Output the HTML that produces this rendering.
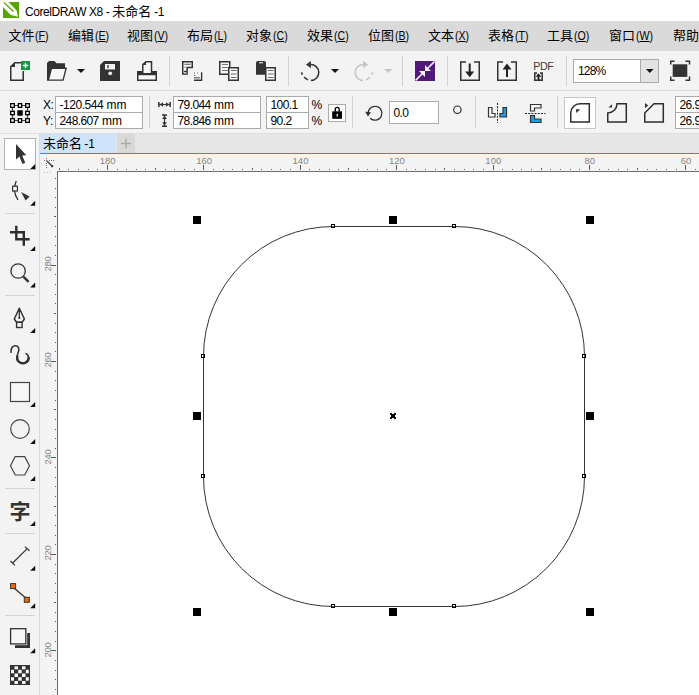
<!DOCTYPE html>
<html><head><meta charset="utf-8"><title>CorelDRAW X8</title>
<style>
html,body{margin:0;padding:0;}
body{width:699px;height:695px;overflow:hidden;position:relative;background:#fff;font-family:"Liberation Sans","Noto Sans CJK SC",sans-serif;font-size:12px;color:#000;}
.abs{position:absolute;}
#title{left:0;top:0;width:699px;height:21px;background:#fff;}
#title .t{left:25px;top:1.5px;font-size:13px;line-height:19px;white-space:nowrap;}
#title .t .l{letter-spacing:-0.42px;font-size:12px;}
#menu{left:0;top:21px;width:699px;height:30px;background:#dadada;}
#menu span.m{position:absolute;top:5px;font-size:13px;line-height:19px;white-space:nowrap;}
#menu span.m i{font-style:normal;font-size:12px;display:inline-block;transform:scaleX(0.88);transform-origin:left center;margin-left:0.8px;}
#menu span.m u{text-decoration:underline;text-underline-offset:1px;}
#tb1{left:0;top:51px;width:699px;height:39px;background:#f3f3f3;}
#tb2{left:0;top:90px;width:699px;height:43px;background:#f3f3f3;border-top:1px solid #dcdcdc;box-sizing:border-box;}
#tabs{left:40px;top:133px;width:659px;height:19px;background:#e7e7e7;border-top:1px solid #dedede;border-bottom:1px solid #1c97ea;}
#tab1{left:0;top:0px;width:76px;height:19px;background:#cfe3fa;font-size:13px;line-height:18px;white-space:nowrap;}
#tab1 span{position:absolute;left:3px;top:0.7px;}
#tab2{left:77px;top:0px;width:18px;height:19px;background:#d9d9d9;}
#toolbox{left:0;top:133px;width:39px;height:562px;background:#f3f3f3;border-right:1px solid #dadada;border-top:1px solid #e2e2e2;box-sizing:content-box;}
#rulerh{left:40px;top:154px;width:659px;height:17px;background:#f4f4f4;}
#rulerv{left:40px;top:171px;width:17px;height:524px;background:#f4f4f4;}
#canvas{left:57px;top:171px;width:642px;height:524px;background:#fff;border-left:1px solid #6e6e6e;border-top:1px solid #6e6e6e;box-sizing:border-box;}
.inp{position:absolute;background:#fff;border:1px solid #ababab;box-sizing:border-box;font-size:12px;line-height:17px;padding-left:3.5px;white-space:nowrap;overflow:hidden;}
.inp b{font-weight:normal;letter-spacing:-0.6px;}
.lbl{position:absolute;font-size:12px;line-height:17px;white-space:nowrap;letter-spacing:-0.4px;}
.rt{position:absolute;font-size:9.5px;line-height:10px;color:#858585;white-space:nowrap;text-align:center;width:30px;}
.rv{position:absolute;font-size:9.5px;line-height:10px;color:#858585;letter-spacing:-0.3px;white-space:nowrap;text-align:center;width:30px;height:10px;transform:rotate(-90deg);transform-origin:center center;}
#zi{left:0;top:0;width:699px;height:695px;pointer-events:none;}
.tl{position:absolute;font-weight:bold;font-size:21px;line-height:21px;color:#333;}
</style></head><body>
<div id="title" class="abs"><div class="abs t"><span class="l">CorelDRAW X8 - </span>未命名<span class="l" style="letter-spacing:-0.5px"> -1</span></div></div>
<div id="menu" class="abs"><span class="m" style="left:8.5px">文件<i>(<u>F</u>)</i></span><span class="m" style="left:68px">编辑<i>(<u>E</u>)</i></span><span class="m" style="left:127px">视图<i>(<u>V</u>)</i></span><span class="m" style="left:187px">布局<i>(<u>L</u>)</i></span><span class="m" style="left:246px">对象<i>(<u>C</u>)</i></span><span class="m" style="left:307px">效果<i>(<u>C</u>)</i></span><span class="m" style="left:368px">位图<i>(<u>B</u>)</i></span><span class="m" style="left:428px">文本<i>(<u>X</u>)</i></span><span class="m" style="left:488px">表格<i>(<u>T</u>)</i></span><span class="m" style="left:547px">工具<i>(<u>O</u>)</i></span><span class="m" style="left:609px">窗口<i>(<u>W</u>)</i></span><span class="m" style="left:673px">帮助<i>(<u>H</u>)</i></span></div>
<div id="tb1" class="abs"></div>
<div id="tb2" class="abs"></div>
<div class="lbl" style="left:43px;top:97px">X:</div><div class="lbl" style="left:43px;top:113px">Y:</div><div class="inp" style="left:55px;top:96px;width:88px;height:17px"><b style="letter-spacing:-0.45px">-120.544</b> mm</div><div class="inp" style="left:55px;top:112px;width:88px;height:17px"><b>248.607</b> mm</div><div class="inp" style="left:173px;top:96px;width:88px;height:17px"><b>79.044</b> mm</div><div class="inp" style="left:173px;top:112px;width:88px;height:17px"><b>78.846</b> mm</div><div class="inp" style="left:266px;top:96px;width:43px;height:17px"><b>100.1</b></div><div class="inp" style="left:266px;top:112px;width:43px;height:17px"><b>90.2</b></div><div class="lbl" style="left:311.6px;top:97px">%</div><div class="lbl" style="left:311.6px;top:113px">%</div><div class="inp" style="left:328px;top:104px;width:18px;height:18px;padding:0"></div><div class="inp" style="left:389px;top:101px;width:50px;height:23px;line-height:23px"><b>0.0</b></div><div class="inp" style="left:564px;top:97px;width:32px;height:32px;padding:0;border-color:#c6c6c6"></div><div class="inp" style="left:675px;top:96px;width:40px;height:17px"><b>26.9</b></div><div class="inp" style="left:675px;top:112px;width:40px;height:17px"><b>26.9</b></div><div class="inp" style="left:573px;top:59px;width:86px;height:24px;line-height:22px;padding-left:4px"><b style="letter-spacing:-0.85px">128%</b></div><div class="abs" style="left:640px;top:60px;width:17px;height:22px;background:#e3e3e3;border-left:1px solid #ababab"></div><div class="abs" id="pdf" style="left:533.3px;top:59.8px;font-size:10.7px;line-height:12px;color:#3c3c3c;letter-spacing:-0.45px">PDF</div><div id="tabs" class="abs"><div id="tab1" class="abs"><span>未命名<span style="position:static;font-size:12px;margin-left:-1px"> -1</span></span></div><div id="tab2" class="abs"></div></div>
<div id="toolbox" class="abs"></div>
<div id="rulerh" class="abs"></div>
<div id="rulerv" class="abs"></div>
<div id="canvas" class="abs"></div>
<div class="tl" style="left:9.5px;top:500.8px">字</div>
<div class="rt" style="left:92.7px;top:155.5px">180</div><div class="rt" style="left:189.1px;top:155.5px">160</div><div class="rt" style="left:285.5px;top:155.5px">140</div><div class="rt" style="left:381.9px;top:155.5px">120</div><div class="rt" style="left:478.3px;top:155.5px">100</div><div class="rt" style="left:574.7px;top:155.5px">80</div><div class="rt" style="left:671.1px;top:155.5px">60</div><div class="rv" style="left:32.5px;top:259.0px">280</div><div class="rv" style="left:32.5px;top:355.4px">260</div><div class="rv" style="left:32.5px;top:451.8px">240</div><div class="rv" style="left:32.5px;top:548.2px">220</div><div class="rv" style="left:32.5px;top:644.6px">200</div><svg id="zi" class="abs" width="699" height="695" viewBox="0 0 699 695">
<path d="M59.5,168V170M68.5,169V170M78.5,169V170M88.5,169V170M97.5,169V170M107.5,165V170M117.5,169V170M126.5,169V170M136.5,169V170M145.5,169V170M155.5,168V170M165.5,169V170M174.5,169V170M184.5,169V170M194.5,169V170M203.5,165V170M213.5,169V170M223.5,169V170M232.5,169V170M242.5,169V170M252.5,168V170M261.5,169V170M271.5,169V170M280.5,169V170M290.5,169V170M300.5,165V170M309.5,169V170M319.5,169V170M329.5,169V170M338.5,169V170M348.5,168V170M358.5,169V170M367.5,169V170M377.5,169V170M386.5,169V170M396.5,165V170M406.5,169V170M415.5,169V170M425.5,169V170M435.5,169V170M444.5,168V170M454.5,169V170M464.5,169V170M473.5,169V170M483.5,169V170M493.5,165V170M502.5,169V170M512.5,169V170M521.5,169V170M531.5,169V170M541.5,168V170M550.5,169V170M560.5,169V170M570.5,169V170M579.5,169V170M589.5,165V170M599.5,169V170M608.5,169V170M618.5,169V170M627.5,169V170M637.5,168V170M647.5,169V170M656.5,169V170M666.5,169V170M676.5,169V170M685.5,165V170M695.5,169V170" stroke="#5a5a5a" stroke-width="1" fill="none" shape-rendering="crispEdges"/>
<path d="M55,178.5H56M55,188.5H56M55,197.5H56M55,207.5H56M54,216.5H56M55,226.5H56M55,236.5H56M55,245.5H56M55,255.5H56M51,265.5H56M55,274.5H56M55,284.5H56M55,294.5H56M55,303.5H56M54,313.5H56M55,323.5H56M55,332.5H56M55,342.5H56M55,351.5H56M51,361.5H56M55,371.5H56M55,380.5H56M55,390.5H56M55,400.5H56M54,409.5H56M55,419.5H56M55,429.5H56M55,438.5H56M55,448.5H56M51,457.5H56M55,467.5H56M55,477.5H56M55,486.5H56M55,496.5H56M54,506.5H56M55,515.5H56M55,525.5H56M55,535.5H56M55,544.5H56M51,554.5H56M55,564.5H56M55,573.5H56M55,583.5H56M55,592.5H56M54,602.5H56M55,612.5H56M55,621.5H56M55,631.5H56M55,641.5H56M51,650.5H56M55,660.5H56M55,670.5H56M55,679.5H56M55,689.5H56" stroke="#5a5a5a" stroke-width="1" fill="none" shape-rendering="crispEdges"/>
<g fill="#707070" shape-rendering="crispEdges"><rect x="44" y="160" width="1" height="1"/><rect x="46" y="160" width="1" height="1"/><rect x="49" y="160" width="1" height="1"/><rect x="51" y="160" width="1" height="1"/><rect x="53" y="160" width="1" height="1"/><rect x="46" y="158" width="1" height="1"/><rect x="46" y="163" width="1" height="1"/><rect x="46" y="165" width="1" height="1"/><rect x="46" y="167" width="1" height="1"/></g>
<path d="M47,161L52,166" stroke="#444" stroke-width="1.5" fill="none"/><rect x="51" y="165" width="2.2" height="2.2" fill="#444"/>
<path d="M44,172.5h1M47,172.5h1M50,172.5h1" stroke="#c9b0d0" stroke-width="1.2"/>
<rect x="203.5" y="226.5" width="381" height="380" rx="130" ry="130" fill="none" stroke="#3a3230" stroke-width="1"/>
<rect x="193" y="216" width="8" height="8" fill="#000" shape-rendering="crispEdges"/>
<rect x="193" y="412" width="8" height="8" fill="#000" shape-rendering="crispEdges"/>
<rect x="193" y="608" width="8" height="8" fill="#000" shape-rendering="crispEdges"/>
<rect x="389" y="216" width="8" height="8" fill="#000" shape-rendering="crispEdges"/>
<rect x="389" y="608" width="8" height="8" fill="#000" shape-rendering="crispEdges"/>
<rect x="586" y="216" width="8" height="8" fill="#000" shape-rendering="crispEdges"/>
<rect x="586" y="412" width="8" height="8" fill="#000" shape-rendering="crispEdges"/>
<rect x="586" y="608" width="8" height="8" fill="#000" shape-rendering="crispEdges"/>
<rect x="331.5" y="224.5" width="3" height="3" fill="#fff" fill-opacity="0.15" stroke="#000" stroke-width="1"/>
<rect x="452.5" y="224.5" width="3" height="3" fill="#fff" fill-opacity="0.15" stroke="#000" stroke-width="1"/>
<rect x="331.5" y="604.5" width="3" height="3" fill="#fff" fill-opacity="0.15" stroke="#000" stroke-width="1"/>
<rect x="452.5" y="604.5" width="3" height="3" fill="#fff" fill-opacity="0.15" stroke="#000" stroke-width="1"/>
<rect x="201.5" y="354.5" width="3" height="3" fill="#fff" fill-opacity="0.15" stroke="#000" stroke-width="1"/>
<rect x="201.5" y="474.5" width="3" height="3" fill="#fff" fill-opacity="0.15" stroke="#000" stroke-width="1"/>
<rect x="582.5" y="354.5" width="3" height="3" fill="#fff" fill-opacity="0.15" stroke="#000" stroke-width="1"/>
<rect x="582.5" y="474.5" width="3" height="3" fill="#fff" fill-opacity="0.15" stroke="#000" stroke-width="1"/>
<path d="M390,413h2v1h2v-1h2v2h-1v2h1v2h-2v-1h-2v1h-2v-2h1v-2h-1z" fill="#000" shape-rendering="crispEdges"/>
<!-- title logo -->
<rect x="3" y="2" width="16" height="16" fill="#5aa400"/>
<path d="M3,2H8.6L16.7,10.7L17.9,16.7L10.7,15L3,7.1z" fill="#fff"/>
<path d="M3.9,2.4L13.5,11.5" stroke="#5aa400" stroke-width="1.3" fill="none"/>
<!-- toolbar1 separators -->
<path d="M169.5,56V86M288.5,56V86M402.5,56V86M447.5,56V86M566.5,56V86" stroke="#d2d2d2" stroke-width="1" fill="none" shape-rendering="crispEdges"/>
<!-- new doc -->
<path d="M21,62.75H14.8L10.75,66.8V80.25H23.25V71" fill="none" stroke="#333" stroke-width="1.5"/>
<path d="M10.5,67L15,62.5V67z" fill="#333"/>
<rect x="21" y="61" width="9" height="9" fill="#0f9b3c"/>
<path d="M22.8,65.5H28.2M25.5,62.8V68.2" stroke="#fff" stroke-width="1.3" fill="none"/>
<!-- open -->
<path d="M47,80.75V63L49,61H54.5L56.5,63.2H65V67.5H67L63.6,80.75z" fill="#333"/>
<path d="M52,69H65.2L62.6,79.4H49.2z" fill="#f8f8f8"/>
<path d="M77,69H85L81,73z" fill="#111"/>
<!-- save -->
<path d="M100,65L104,61H120V81H100z" fill="#333"/>
<rect x="105" y="64" width="10" height="5.5" fill="#f4f4f4"/>
<rect x="107.2" y="65" width="1.6" height="3.2" fill="#555"/>
<circle cx="110.2" cy="73.3" r="1.9" fill="#f4f4f4"/>
<!-- print -->
<rect x="137.75" y="71.75" width="18.5" height="8.5" fill="#f8f8f8" stroke="#333" stroke-width="1.5"/>
<rect x="137" y="71" width="20" height="4.2" fill="#333"/>
<path d="M142.75,73.8V64.5L146,61.75H151.5V73.8z" fill="#f8f8f8" stroke="#333" stroke-width="1.5"/>
<path d="M142.5,65L146,61.5V65z" fill="#333"/>
<!-- cut -->
<path d="M182.75,61.75H192.25V67.5H187.1V73.9H182.75z" fill="#fafafa" stroke="#333" stroke-width="1.5"/>
<path d="M184.5,64.3H190.7" stroke="#777" stroke-width="1.3"/>
<path d="M184,67.4H186.5M184,73H186.5" stroke="#aaa" stroke-width="1"/>
<path d="M184,71.4H187" stroke="#333" stroke-width="1.2"/>
<rect x="194" y="72.5" width="7" height="7.5" fill="#fafafa"/>
<path d="M194,80.2H201.6V72.2" fill="none" stroke="#333" stroke-width="1.4"/>
<path d="M194,73H200" stroke="#555" stroke-width="1.2" stroke-dasharray="1,2"/>
<path d="M194,75.4H195.4" stroke="#555" stroke-width="1"/>
<path d="M194,77.8H199.8" stroke="#777" stroke-width="1.5"/>
<!-- copy -->
<rect x="219.75" y="61.75" width="10" height="12.5" fill="#f4f4f4" stroke="#333" stroke-width="1.5"/>
<path d="M222,64.5H228M222,67.5H228M222,70.5H228" stroke="#777" stroke-width="1.2"/>
<rect x="228.75" y="67.75" width="9.5" height="12.5" fill="#f8f8f8" stroke="#333" stroke-width="1.5"/>
<path d="M231,70.5H236.5M231,74H236.5M231,77.5H236.5" stroke="#666" stroke-width="1.2"/>
<!-- paste -->
<path d="M256,74.7V63Q256,61 258,61H264Q266,61 266,63V74.7z" fill="#333"/>
<path d="M259,62.7H263" stroke="#ccc" stroke-width="1.4"/>
<rect x="265.75" y="67.75" width="9.5" height="12.5" fill="#f8f8f8" stroke="#333" stroke-width="1.5"/>
<path d="M268,70.5H273.5M268,74H273.5M268,77.5H273.5" stroke="#666" stroke-width="1.2"/>
<!-- undo -->
<path d="M310.5,64.5A8,8 0 1 1 311,80.5" fill="none" stroke="#333" stroke-width="1.5"/>
<path d="M306,64.5L310.9,61V68.2z" fill="#333"/>
<path d="M307.8,79.8L304,77.2M302.3,74.7L301.5,72.2" stroke="#333" stroke-width="1.5" fill="none"/>
<path d="M331,69H339L335,73z" fill="#111"/>
<!-- redo (disabled) -->
<path d="M363.5,64.5A8,8 0 1 0 363,80.5" fill="none" stroke="#c4c4c4" stroke-width="1.5"/>
<path d="M368,64.5L363.1,61V68.2z" fill="#c4c4c4"/>
<path d="M366.2,79.8L370,77.2M371.7,74.7L372.5,72.2" stroke="#c4c4c4" stroke-width="1.5" fill="none"/>
<path d="M384.3,69H392.3L388.3,73z" fill="#c4c4c4"/>
<!-- purple -->
<rect x="415" y="61" width="20" height="20" fill="#521a78"/>
<path d="M415.6,80.4L422.5,73.5M434.4,61.6L427.5,68.5" stroke="#f6f6f6" stroke-width="1.6"/>
<path d="M425,71V65L431,71zM425,71V77L419,71z" fill="#f6f6f6"/>
<!-- import -->
<path d="M466,62H460.75V80.25H479.25V62H474" fill="none" stroke="#333" stroke-width="1.5"/>
<path d="M469.7,63.5V73" stroke="#222" stroke-width="2"/>
<path d="M465.2,71.5H474.2L469.7,77.2z" fill="#222"/>
<!-- export -->
<path d="M503,62H497.75V80.25H516.25V62H511" fill="none" stroke="#333" stroke-width="1.5"/>
<path d="M507,68V77" stroke="#222" stroke-width="2"/>
<path d="M502.5,69.5H511.5L507,63.5z" fill="#222"/>
<!-- pdf small icon -->
<path d="M537,73H534.75V80.25H542.25V73H540" fill="#e8e8e8" stroke="#333" stroke-width="1.5"/>
<path d="M538.5,73.2L541.3,76.8H535.7z" fill="#222"/>
<path d="M538.5,76V80" stroke="#222" stroke-width="1.8"/>
<!-- zoom combo arrow -->
<path d="M646,69H653.6L649.8,73z" fill="#111"/>
<!-- full screen -->
<rect x="672.7" y="64.3" width="14.6" height="12.6" fill="#333"/>
<path d="M670.75,64.5V61.25H674.5M685.5,61.25H689.5V64.5M689.5,76.5V80.25H685.5M674.5,80.25H670.75V76.5" fill="none" stroke="#333" stroke-width="1.5"/>

<!-- property bar separators -->
<path d="M149.5,96V128M352.5,96V128M475.5,96V128M557.5,96V128" stroke="#d2d2d2" stroke-width="1" fill="none" shape-rendering="crispEdges"/>
<!-- object origin icon -->
<path d="M12.5,105.5H27.5V120.5H12.5z" fill="none" stroke="#444" stroke-width="1.2"/>
<g fill="#f8f8f8" stroke="#000" stroke-width="1.3">
<rect x="10.65" y="103.65" width="3.7" height="3.7"/><rect x="10.65" y="111.35" width="3.7" height="3.3"/><rect x="10.65" y="118.65" width="3.7" height="3.7"/><rect x="18.35" y="103.65" width="3.3" height="3.7"/><rect x="18.35" y="118.65" width="3.3" height="3.7"/><rect x="25.65" y="103.65" width="3.7" height="3.7"/><rect x="25.65" y="111.35" width="3.7" height="3.3"/><rect x="25.65" y="118.65" width="3.7" height="3.7"/>
</g>
<rect x="17.3" y="110.2" width="5.5" height="5.5" rx="0.6" fill="#000"/>
<!-- width icon -->
<path d="M158.85,102V107M170.15,102V107" stroke="#333" stroke-width="1.5"/>
<path d="M159,104.5H170" stroke="#333" stroke-width="1.2"/>
<path d="M159.8,104.5L163,102.2V106.8zM169.2,104.5L166,102.2V106.8z" fill="#333"/>
<!-- height icon -->
<path d="M162,114.9H167M162,126.3H167" stroke="#333" stroke-width="1.5"/>
<path d="M164.5,115V126" stroke="#333" stroke-width="1.2"/>
<path d="M164.5,115.8L162.1,119H166.9zM164.5,125.4L162.1,122.2H166.9z" fill="#333"/>
<!-- lock -->
<rect x="332.2" y="111.3" width="9.8" height="7.5" fill="#000"/>
<path d="M335.3,111.5V109.3A1.95,1.95 0 0 1 339.2,109.3V111.5" fill="none" stroke="#000" stroke-width="1.4"/>
<rect x="336.6" y="113.8" width="1.2" height="2.8" fill="#fff"/>
<!-- rotate -->
<path d="M368.2,114.2A6.9,6.9 0 1 1 370.2,118.2" fill="none" stroke="#333" stroke-width="1.3"/>
<path d="M365.2,111.8L371,112.3L368,116.6z" fill="#333"/>
<!-- degree -->
<circle cx="457.4" cy="109.7" r="3.7" fill="none" stroke="#333" stroke-width="1.2"/>
<!-- mirror h -->
<path d="M488.5,107.5H492V113.5H495V117H488.5z" fill="#f8f8f8" stroke="#333" stroke-width="1.2"/>
<path d="M497.5,103V123" stroke="#222" stroke-width="1" stroke-dasharray="2,1.2"/>
<path d="M506.5,107.5H503V113.5H500V117H506.5z" fill="#1c9fe6" stroke="#333" stroke-width="1.2"/>
<!-- mirror v -->
<path d="M530.5,104.5H541V108H534.5V111H530.5z" fill="#f8f8f8" stroke="#333" stroke-width="1.2"/>
<path d="M525,113.5H545.5" stroke="#222" stroke-width="1" stroke-dasharray="2,1.2"/>
<path d="M530.5,122.5H541V119H534.5V115.5H530.5z" fill="#1c9fe6" stroke="#333" stroke-width="1.2"/>
<!-- round corner -->
<path d="M570.75,122.1V113A9.25,9.25 0 0 1 580,103.75H589.3V122.1z" fill="none" stroke="#2e2e2e" stroke-width="1.5"/>
<path d="M575.9,109.2H580.2L576.4,113z" fill="#333"/>
<!-- scallop -->
<path d="M607.75,122.1V113A9.25,9.25 0 0 0 617,103.75H626.3V122.1z" fill="none" stroke="#2e2e2e" stroke-width="1.5"/>
<path d="M608.4,107.4H612V104.2z" fill="#333"/>
<!-- chamfer -->
<path d="M644.75,122.1V113L654,103.75H663.3V122.1z" fill="none" stroke="#2e2e2e" stroke-width="1.5"/>
<path d="M645,103V108.2L648.2,105.6z" fill="#333"/>
<!-- tab plus -->
<path d="M121,143.5H131M126,138.5V148.5" stroke="#ababab" stroke-width="1.4"/>

<!-- toolbox -->
<rect x="4.5" y="138.5" width="31" height="31" fill="#fff" stroke="#b4b4b4" stroke-width="1"/>
<path d="M16,144V159.6L19.5,156.6L22.4,163.9L25.2,162.7L22.2,155.5L26.3,155.2z" fill="#333"/>
<g fill="#111">
<path d="M35.2,163.9V168.9H30.2z"/><path d="M35.2,200.7V205.7H30.2z"/><path d="M35.2,246.0V251.0H30.2z"/><path d="M35.2,282.5V287.5H30.2z"/>
<path d="M35.2,328.0V333.0H30.2z"/><path d="M35.2,401.9V406.9H30.2z"/><path d="M35.2,438.9V443.9H30.2z"/><path d="M35.2,476.0V481.0H30.2z"/>
<path d="M35.2,520.9V525.9H30.2z"/><path d="M35.2,565.7V570.7H30.2z"/><path d="M35.2,603.2V608.2H30.2z"/><path d="M35.2,648.2V653.2H30.2z"/>
</g>
<path d="M5,213.5H35M5,295.5H35M5,488.5H35M5,533.5H35M5,615.5H35" stroke="#d4d4d4" stroke-width="1" shape-rendering="crispEdges"/>
<!-- shape tool -->
<path d="M16.2,181Q12,191 18,200" fill="none" stroke="#333" stroke-width="1.3"/>
<rect x="12.6" y="186.2" width="4.8" height="4.8" fill="#f8f8f8" stroke="#333" stroke-width="1.2"/>
<path d="M21.1,192L29.6,196.6L25.6,200.5z" fill="#333"/>
<!-- crop -->
<path d="M10,232.3H23.8V245.8M16.3,225.7V239.3H29.6" fill="none" stroke="#2e2e2e" stroke-width="2.4"/>
<!-- zoom -->
<circle cx="18.1" cy="271" r="7.2" fill="none" stroke="#333" stroke-width="1.3"/>
<path d="M23.3,276.6L28.6,281.8" stroke="#333" stroke-width="2.4"/>
<!-- pen -->
<path d="M19.3,308.3L14.3,319L16.6,322.3H22.1L24.4,319z" fill="none" stroke="#333" stroke-width="1.5" stroke-linejoin="round"/>
<path d="M19.3,307.6L17.6,312H21z" fill="#333"/>
<path d="M19.3,309V318" stroke="#333" stroke-width="1.3"/>
<circle cx="19.3" cy="318" r="1.1" fill="#333"/>
<rect x="16.6" y="322.3" width="5.5" height="5.2" fill="#f8f8f8" stroke="#333" stroke-width="1.4"/>
<!-- artistic media -->
<path d="M11,352.3C10.5,348 13,345.6 15.6,345.8C19,346 19.5,349.5 18.2,352.5C16.5,356.5 16.5,360.5 20,362.5C24,364.5 28.6,362 28.6,358C28.6,355.8 27.3,354.3 26,353.6" fill="none" stroke="#333" stroke-width="1.6" stroke-linecap="round"/>
<path d="M17.3,356.5C16.8,359.5 17.5,361.3 20,362.5C24,364.5 28.6,362 28.6,358" fill="none" stroke="#333" stroke-width="2.4" stroke-linecap="round"/>
<!-- rectangle -->
<rect x="10.5" y="382.5" width="19" height="19" fill="#f6f6f6" stroke="#444" stroke-width="1.2"/>
<!-- ellipse -->
<circle cx="20" cy="429" r="9.3" fill="none" stroke="#444" stroke-width="1.2"/>
<!-- polygon -->
<path d="M10.5,465.8L15.2,456.6H24.7L29.5,465.8L24.7,475H15.2z" fill="none" stroke="#444" stroke-width="1.2"/>
<!-- dimension -->
<path d="M12.7,563L27.2,548.6M10.4,561L15,565.4M24.8,546.6L29.5,550.8" fill="none" stroke="#333" stroke-width="1.2"/>
<!-- connector -->
<path d="M14,588L27,599" stroke="#333" stroke-width="1.3"/>
<rect x="10.6" y="583.6" width="5" height="5" fill="#f56a00" stroke="#333" stroke-width="1"/>
<rect x="24.3" y="597.3" width="5" height="5" fill="#f56a00" stroke="#333" stroke-width="1"/>
<!-- drop shadow -->
<path d="M15,633H30V648H15z" fill="#333"/>
<rect x="10" y="628" width="17.2" height="17.2" fill="#e9e9e9"/>
<rect x="10.6" y="628.7" width="15.2" height="15.2" fill="#f6f6f6" stroke="#333" stroke-width="1.3"/>
<!-- transparency -->
<rect x="10" y="665" width="20" height="20" fill="#333"/>
<g fill="#f8f8f8">
<rect x="14.5" y="666.3" width="3.5" height="3"/><rect x="22" y="666.3" width="3.5" height="3"/>
<rect x="11" y="669.8" width="3" height="3.5"/><rect x="18.2" y="669.8" width="3.5" height="3.5"/><rect x="25.8" y="669.8" width="3" height="3.5"/>
<rect x="14.5" y="673.5" width="3.5" height="3.5"/><rect x="22" y="673.5" width="3.5" height="3.5"/>
<rect x="11" y="677.2" width="3" height="3.5"/><rect x="18.2" y="677.2" width="3.5" height="3.5"/><rect x="25.8" y="677.2" width="3" height="3.5"/>
<rect x="14.5" y="681" width="3.5" height="3"/><rect x="22" y="681" width="3.5" height="3"/>
</g>

</svg>
</body></html>
